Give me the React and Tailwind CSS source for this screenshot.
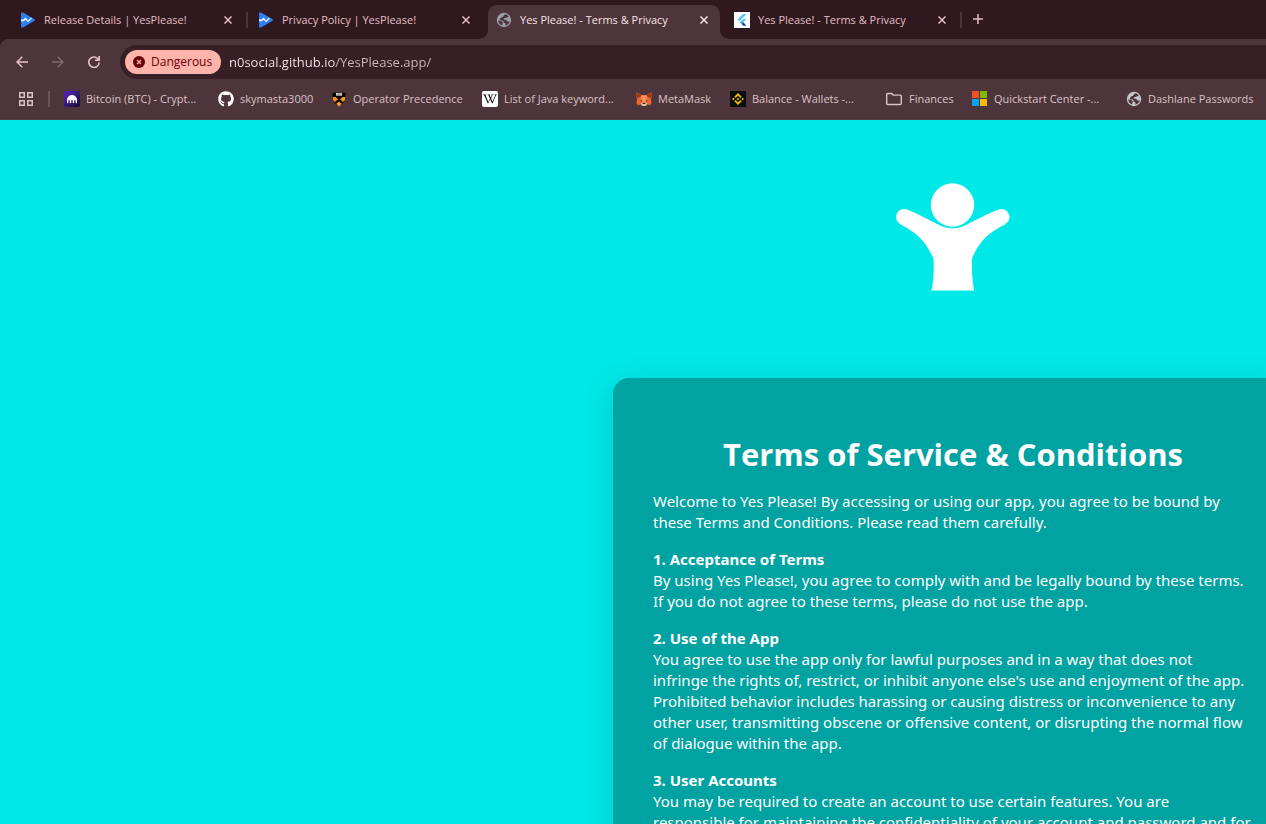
import React from "react";
import { FaGithub, FaWikipediaW } from "react-icons/fa";
import { SiBinance } from "react-icons/si";

function PlayConsoleIcon() {
  return (
    <svg viewBox="0 0 16 16" className="size-4 shrink-0" aria-hidden="true">
      <path d="M1 1.6C1 .5 2 .1 3 .6L14.2 7c1 .6 1 1.5 0 2.1L3 15.4c-1 .5-2 .1-2-1z" fill="#2f80ee" />
      <path d="M1 7.600h2.400L5.600 5.600l2.600 2.800 2.300-2.500h1.700L8.200 10.300 5.600 7.700 3.800 9.300H1z" fill="#e8f4ff" />
    </svg>
  );
}

function GlobeIcon({ className }) {
  return (
    <svg viewBox="0 0 16 16" className={className} aria-hidden="true">
      <circle cx="8" cy="8" r="7.200" fill="currentColor" />
      <g fill="#4e353b">
        <path d="M9.200 2.200c1.500.3 2.700 1.200 3.600 2.400-.6.700-1.600 1.100-2.500.8-.5.500-1.200.7-1.900.6-.6.500-.7 1.100-.2 1.500.7.300 1.600 0 2.200.5.600.5.500 1.300 1.200 1.600.8.200 1.500-.2 2.300 0-.6 2-2.200 3.600-4.300 4.100-.5-.5-.3-1.300.2-1.700-.4-.8-1.300-.6-1.900-1.200-.6-.7-.2-1.500-.9-2-.9-.6-2 0-2.900-.6C3.500 7.500 4 6.500 4.800 5.800c.7-.6 1.600-.4 2.200-1.100.6-.8 1.200-2.100 2.200-2.500z" />
        <path d="M2.200 8.300c1.100.1 2.100.6 3.100 1 .9.400 1.700 1 1.500 1.900-.2.600-.8.900-.6 2.400C4 13 2.300 10.900 2.200 8.300z" />
      </g>
    </svg>
  );
}

function FlutterIcon() {
  return (
    <svg viewBox="0 0 16 16" className="size-4 shrink-0" aria-hidden="true">
      <path fill="#fff" d="M0 0h16v16H0z" />
      <path d="M9 2h3.500L5.300 9.200 3.500 7.500z" fill="#54c5f8" />
      <path d="M9.200 7h3.300L9.300 10.300 7.600 8.600z" fill="#54c5f8" />
      <path d="M5.900 10.300l1.700-1.700 1.700 1.700-1.700 1.700z" fill="#29a6e5" />
      <path d="M7.600 12l1.700-1.700 3.300 3.500H9.300z" fill="#0b4a9c" />
    </svg>
  );
}

function KrakenIcon() {
  return (
    <svg viewBox="0 0 16 16" className="size-4 shrink-0" aria-hidden="true">
      <defs>
        <linearGradient id="kraken" x1="0" y1="0" x2="1" y2="1">
          <stop offset="0" stopColor="#5a22cc" />
          <stop offset="1" stopColor="#160d2e" />
        </linearGradient>
      </defs>
      <rect width="16" height="16" rx="2" fill="url(#kraken)" />
      <path d="M3 11.500V9a5 5 0 0 1 10 0v2.500a.7.700 0 0 1-1.400 0V9.600a.7.700 0 0 0-1.400 0v1.900a.7.700 0 0 1-1.500 0V9.600a.7.700 0 0 0-1.400 0v1.900a.7.700 0 0 1-1.500 0V9.600a.7.700 0 0 0-1.400 0v1.900a.7.700 0 0 1-1.400 0z" fill="#fff" />
    </svg>
  );
}

function PrincetonIcon() {
  return (
    <svg viewBox="0 0 16 16" className="size-4 shrink-0" aria-hidden="true">
      <path d="M1.500 2l3-.5L8 1l3.500.5 3 .5v3.500H14V9l-2 3-4 3.500L4 12 2 9V5.500h-.5z" fill="#090704" />
      <path d="M5 1.800h6v2.900H5z" fill="#c9c4bf" />
      <path d="M7.600 1.800h.8v2.900h-.8z" fill="#777" />
      <path d="M2 6h2.600L8 9l3.400-3H14v3l-2 2-4-2.400L4 11 2 9z" fill="#f09124" />
      <path d="M4.600 5.500h6.800L8 8.400zM4.600 9.200L8 8.400l3.400.8L8 10.600z" fill="#090704" />
      <path d="M8 10.400l2.800 2.400L8 15.700l-2.800-2.900z" fill="#f5952b" />
    </svg>
  );
}

function MetaMaskIcon() {
  return (
    <svg viewBox="0 0 16 16" className="size-4 shrink-0" aria-hidden="true">
      <path d="M.8 1l4.700 3.200h5L15.200 1l.6 4.500-1 3.300.8 2.500-1.300 3-3.300-.8-1.500 1.200H6.500L5 13.500l-3.300.8-1.300-3 .8-2.500-1-3.300z" fill="#f0682e" />
      <path d="M.8 1l4.700 3.200-1.400 2L1.200 7 .2 5.500zM15.200 1l-4.700 3.200 1.400 2 2.900.8 1-1.500z" fill="#9a3a1c" />
      <path d="M5.500 4.200h5l.5 3.500L9.500 11h-3L5 7.700z" fill="#ff8d5d" />
      <path d="M4 9.200l2.200.4-.3 1.100zM12 9.200l-2.200.4.300 1.100z" fill="#5a2a1c" />
      <path d="M5 12.300l1.500-.5h3l1.500.5-.8 2.400H5.800z" fill="#d9cfca" />
      <path d="M6.700 12h2.600l.2.900h-3z" fill="#352321" />
    </svg>
  );
}

function BinanceIcon() {
  return (
    <span className="flex size-4 shrink-0 items-center justify-center bg-[#0b0e11]">
      <SiBinance className="size-3 text-[#f0b90b]" aria-hidden="true" />
    </span>
  );
}

function WikipediaIcon() {
  return (
    <span className="flex size-4 shrink-0 items-center justify-center rounded-xs bg-white">
      <FaWikipediaW className="size-3.5 text-black" aria-hidden="true" />
    </span>
  );
}

function FolderIcon() {
  return (
    <svg viewBox="0 0 18 16" className="h-4 w-[18px] shrink-0" fill="none" stroke="#d9c3c6" strokeWidth="1.400" aria-hidden="true">
      <path d="M1.700 3.500c0-.6.400-1 1-1h4l1.500 1.600h7.100c.6 0 1 .4 1 1v7.400c0 .6-.4 1-1 1H2.700c-.6 0-1-.4-1-1z" />
    </svg>
  );
}

function MicrosoftIcon() {
  return (
    <svg viewBox="0 0 16 16" className="size-4 shrink-0" aria-hidden="true">
      <path d="M0 0h7v7H0z" fill="#f25022" />
      <path d="M8 0h7v7H8z" fill="#7fba00" />
      <path d="M0 8h7v7H0z" fill="#00a4ef" />
      <path d="M8 8h7v7H8z" fill="#ffb900" />
    </svg>
  );
}

function AppsIcon() {
  return (
    <svg viewBox="0 0 14 14" className="size-3.5" fill="none" stroke="#d9c3c6" strokeWidth="1.500" aria-hidden="true">
      <path d="M.75.75h4.500v4.500H.75zM8.750.75h4.500v4.500h-4.500zM.75 8.750h4.500v4.500H.75zM8.750 8.750h4.500v4.500h-4.500z" />
    </svg>
  );
}

function CloseIcon() {
  return (
    <svg viewBox="0 0 8 8" className="size-2" stroke="currentColor" strokeWidth="1.500" aria-hidden="true">
      <path d="M.5.5l7 7M7.500.5l-7 7" />
    </svg>
  );
}

function ArrowIcon({ className }) {
  return (
    <svg viewBox="0 0 12 12" className={className} fill="none" stroke="currentColor" strokeWidth="1.500" aria-hidden="true">
      <path d="M12 6H1M6.300.7L1 6l5.300 5.300" />
    </svg>
  );
}

function ReloadIcon() {
  return (
    <svg viewBox="0 0 12 12" className="size-3" fill="none" stroke="currentColor" strokeWidth="1.600" aria-hidden="true">
      <path d="M10.500 3.600A5.200 5.200 0 1 0 11.200 6.500" />
      <path d="M11.200 0v4.300H6.900" />
    </svg>
  );
}

const tabs = [
  { title: "Release Details | YesPlease!", icon: <PlayConsoleIcon />, divider: true },
  { title: "Privacy Policy | YesPlease!", icon: <PlayConsoleIcon /> },
  { title: "Yes Please! - Terms & Privacy", icon: <GlobeIcon className="size-4 shrink-0 text-[#9aa0a6]" />, active: true },
  { title: "Yes Please! - Terms & Privacy", icon: <FlutterIcon />, divider: true },
];

function Tab({ title, icon, active, divider }) {
  return (
    <div className={"relative flex h-[34px] w-[238px] shrink-0 items-center " + (active ? "text-[#f7e4e7]" : "text-[#e3bdc4]")}>
      {active && (
        <svg viewBox="0 0 252 34" className="absolute -left-[10px] top-0 h-[34px] w-[252px]" aria-hidden="true">
          <path d="M0 34C6 34 10 30 10 24V10C10 4 14 0 20 0H232C238 0 242 4 242 10V24C242 30 246 34 252 34Z" fill="#4e353b" />
        </svg>
      )}
      <button type="button" role="tab" aria-selected={!!active} className="relative flex h-full min-w-0 flex-1 items-center gap-2 pb-1 pl-2 text-left">
        {icon}
        <span className="truncate">{title}</span>
      </button>
      <button type="button" aria-label="Close tab" className="relative mr-2.5 mb-1 flex size-4 items-center justify-center">
        <CloseIcon />
      </button>
      <span className={"mr-0.5 mb-1 h-4 w-0.5 " + (divider ? "bg-[#4e353b]" : "")} />
    </div>
  );
}

const bookmarks = [
  { label: "Bitcoin (BTC) - Crypt...", icon: <KrakenIcon />, width: "w-[154px]" },
  { label: "skymasta3000", icon: <FaGithub className="size-4 shrink-0 text-white" aria-hidden="true" />, width: "w-[113px]" },
  { label: "Operator Precedence", icon: <PrincetonIcon />, width: "w-[151px]" },
  { label: "List of Java keyword...", icon: <WikipediaIcon />, width: "w-[154px]" },
  { label: "MetaMask", icon: <MetaMaskIcon />, width: "w-[94px]" },
  { label: "Balance - Wallets -...", icon: <BinanceIcon />, width: "w-[155px]" },
  { label: "Finances", icon: <FolderIcon />, width: "w-[87px]" },
  { label: "Quickstart Center -...", icon: <MicrosoftIcon />, width: "w-[154px]" },
  { label: "Dashlane Passwords", icon: <GlobeIcon className="size-4 shrink-0 text-[#c4c7cb]" />, width: "w-[140px]" },
];

const sections = [
  {
    title: "1. Acceptance of Terms",
    lines: [
      "By using Yes Please!, you agree to comply with and be legally bound by these terms.",
      "If you do not agree to these terms, please do not use the app.",
    ],
  },
  {
    title: "2. Use of the App",
    lines: [
      "You agree to use the app only for lawful purposes and in a way that does not",
      "infringe the rights of, restrict, or inhibit anyone else's use and enjoyment of the app.",
      "Prohibited behavior includes harassing or causing distress or inconvenience to any",
      "other user, transmitting obscene or offensive content, or disrupting the normal flow",
      "of dialogue within the app.",
    ],
  },
  {
    title: "3. User Accounts",
    lines: [
      "You may be required to create an account to use certain features. You are",
      "responsible for maintaining the confidentiality of your account and password and for",
    ],
  },
];

function PersonLogo() {
  return (
    <svg viewBox="0 0 114 108" className="h-[108px] w-[114px] shrink-0" fill="#fff" role="img" aria-label="Yes Please">
      <circle cx="56.500" cy="22" r="21.700" />
      <path d="M11 26.500C7 25.300 2.500 27 .8 30.700c-2 4.300 0 8.500 4.200 11C19 48.500 30 58 37.500 75.500c.6 10 .3 20-2 32H78c-2-12-2.500-22-2-32C83 58 94 48.500 108.500 41.700c4.200-2.500 6.200-6.700 4.200-11-1.700-3.700-6.200-5.400-10.200-4.200C91 30.500 80 37.500 68 42.500c-7.500 3-15.500 3-23 0C33 37.500 22 30.500 11 26.500Z" />
      <path d="M38 38.300C49 47 64 47 75 38.300" fill="none" stroke="#00e8e8" strokeWidth="1" />
    </svg>
  );
}

export default function App() {
  return (
    <div className="flex h-screen flex-col overflow-hidden bg-[#00e8e8] font-['Open_Sans',sans-serif] text-[11px]">
      <header className="shrink-0 overflow-hidden bg-[#2f191e]">
        <div role="tablist" className="flex h-[39px] items-end pl-3">
          {tabs.map((tab, i) => (
            <Tab key={i} {...tab} />
          ))}
          <button type="button" aria-label="New tab" className="mb-3.5 ml-2 flex size-3 items-center justify-center text-[#e3bdc4]">
            <svg viewBox="0 0 10 10" className="size-2.5" stroke="currentColor" strokeWidth="1.500" aria-hidden="true">
              <path d="M5 0v10M0 5h10" />
            </svg>
          </button>
        </div>
        <div className="rounded-tl-lg border-b border-[#573e44] bg-[#4e353b]">
          <div className="flex items-center pt-1.5">
            <nav className="flex w-[120px] shrink-0 items-center gap-6 pl-4 text-[#e8c3ca]">
              <button type="button" aria-label="Back"><ArrowIcon className="size-3" /></button>
              <button type="button" aria-label="Forward" className="text-[#84696f]"><ArrowIcon className="size-3 rotate-180" /></button>
              <button type="button" aria-label="Reload"><ReloadIcon /></button>
            </nav>
            <div className="-mr-5 flex h-[34px] flex-1 items-center rounded-full bg-[#381f25] pl-[5px]">
              <button type="button" className="flex h-6 w-24 items-center gap-1.5 rounded-full bg-[#ffb4ab] pl-2 text-xs text-[#690005]">
                <svg viewBox="0 0 12 12" className="size-3 shrink-0" aria-hidden="true">
                  <circle cx="6" cy="6" r="6" fill="#690005" />
                  <path d="M4 4l4 4M8 4L4 8" stroke="#ffb4ab" strokeWidth="1.300" />
                </svg>
                <span>Dangerous</span>
              </button>
              <input
                type="text"
                aria-label="Address"
                defaultValue="n0social.github.io/YesPlease.app/"
                className="ml-2 h-6 flex-1 bg-[linear-gradient(to_right,#fbeaed_107px,#cfbabe_107px)] bg-clip-text text-[13px] text-transparent caret-white outline-none"
              />
            </div>
          </div>
          <nav aria-label="Bookmarks" className="flex h-10 items-center pl-[19px] text-[#d9c3c6]">
            <button type="button" aria-label="Apps"><AppsIcon /></button>
            <span className="mr-3.5 ml-[15px] h-4 w-0.5 bg-[#6f5359]" />
            {bookmarks.map((b) => (
              <a key={b.label} href="#" className={"flex shrink-0 items-center gap-1.5 whitespace-nowrap " + b.width}>
                {b.icon}
                <span>{b.label}</span>
              </a>
            ))}
          </nav>
        </div>
      </header>
      <main className="flex min-h-0 flex-1 justify-start overflow-hidden pl-[613px]">
        <div className="flex w-[680px] shrink-0 flex-col items-center pt-[63px] text-white">
          <PersonLogo />
          <article className="mt-[87px] w-full shrink-0 rounded-2xl bg-[#00a2a2] px-10 pt-[55px] pb-10 font-['Noto_Sans',sans-serif] text-[15px] leading-[21px] whitespace-nowrap shadow-[0_8px_32px_rgba(0,0,0,0.15)]">
            <h1 className="mb-4 text-center font-['Open_Sans',sans-serif] text-[31px] leading-[42px] font-bold">Terms of Service &amp; Conditions</h1>
            <p className="mb-4">
              Welcome to Yes Please! By accessing or using our app, you agree to be bound by
              <br />
              these Terms and Conditions. Please read them carefully.
            </p>
            {sections.map((s) => (
              <section key={s.title} className="mb-4">
                <h2 className="font-bold">{s.title}</h2>
                <p>
                  {s.lines.map((line) => (
                    <span key={line} className="block">{line}</span>
                  ))}
                </p>
              </section>
            ))}
          </article>
        </div>
      </main>
    </div>
  );
}
